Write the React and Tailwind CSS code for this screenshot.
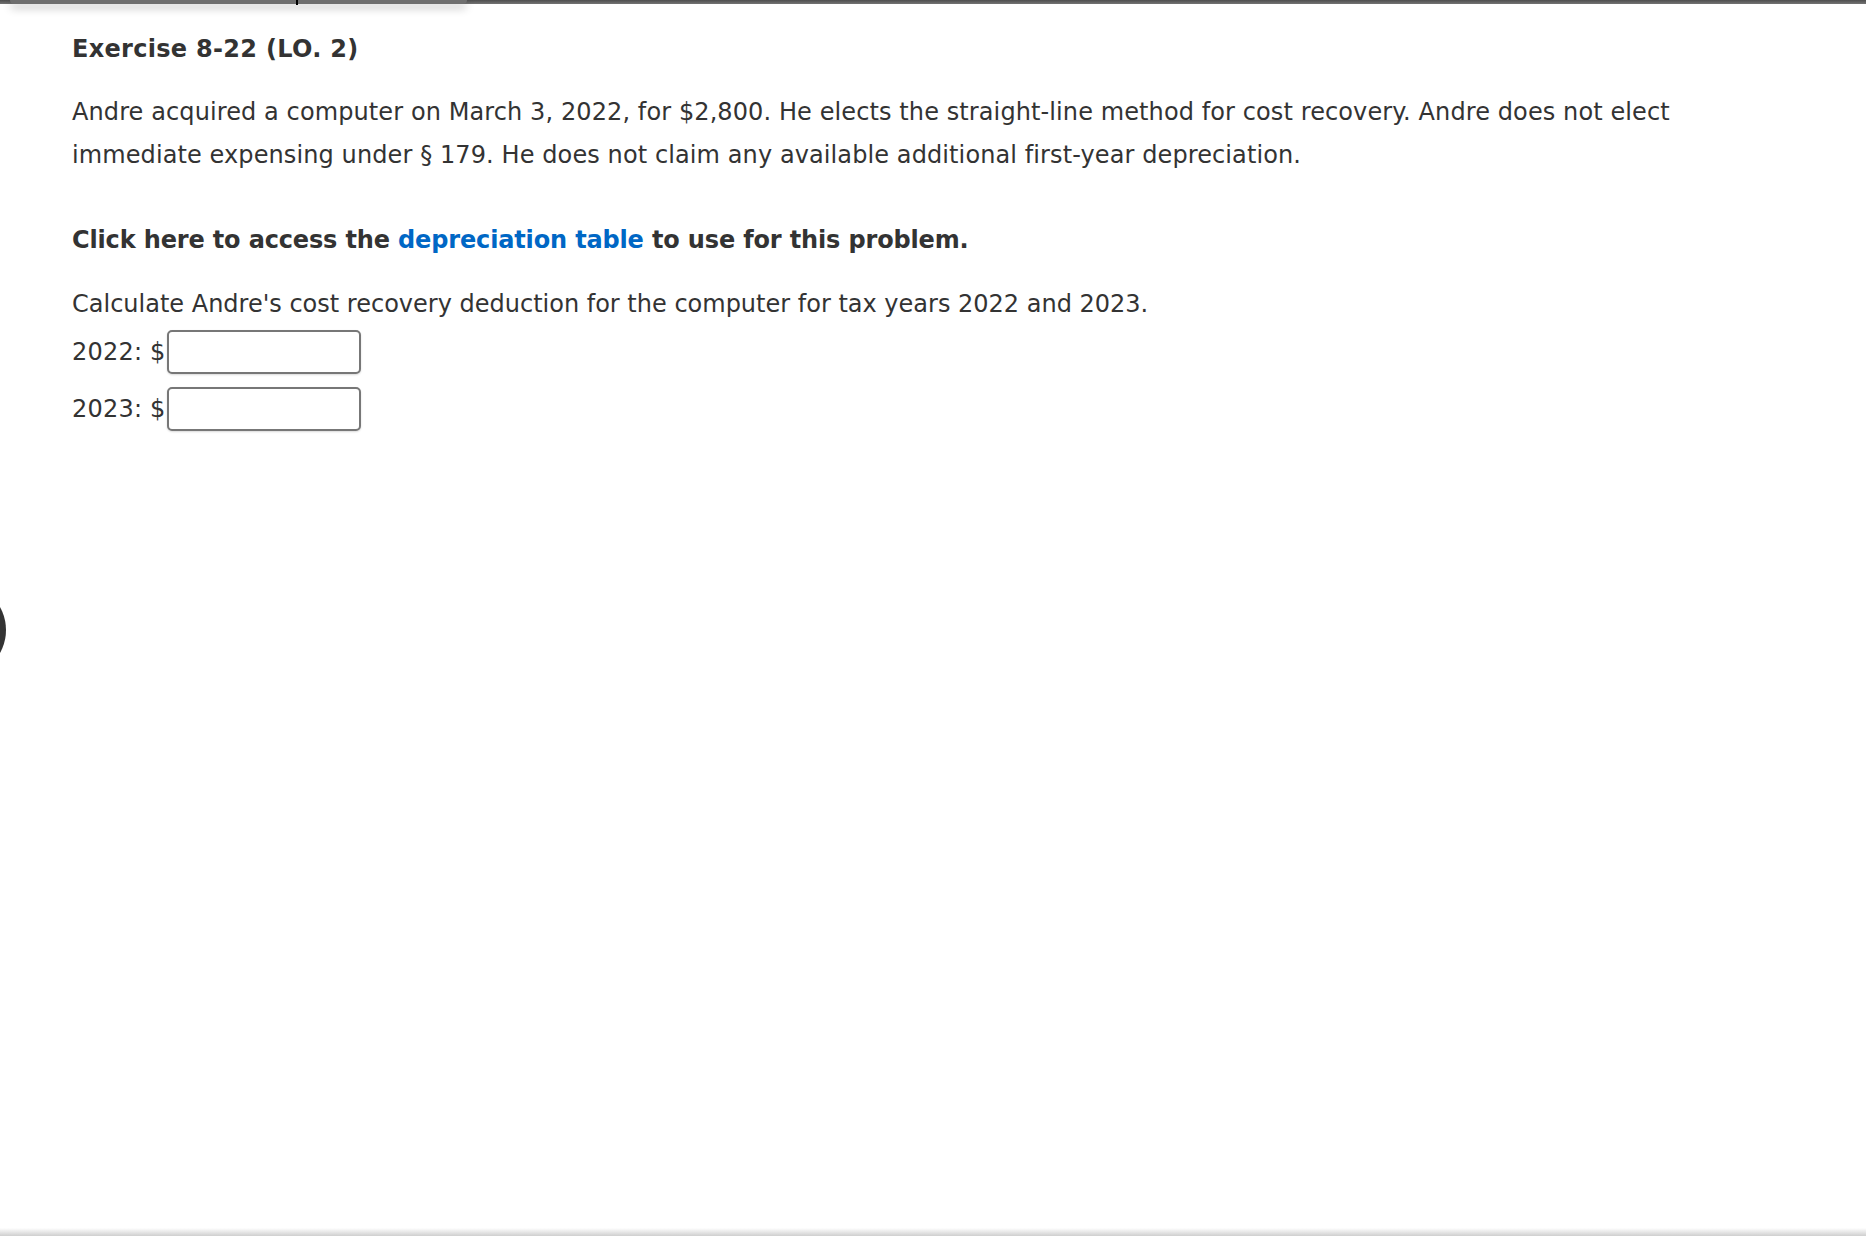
import { useState } from 'react';

const YearInput = ({ year, value, onChange }) => (
  <div className="flex items-center h-[44px]">
    <span className="leading-[44px] tracking-[0.2px]">{year}: $</span>
    <input
      type="text"
      value={value}
      onChange={(e) => onChange(e.target.value)}
      className="ml-[2px] w-[194px] h-[44px] border-2 border-[#777777] rounded-[5px] bg-white px-2 outline-none shadow-[0_1px_2px_rgba(0,0,0,0.15)]"
    />
  </div>
);

const App = () => {
  const [values, setValues] = useState({ 2022: '', 2023: '' });

  return (
    <div className="relative h-[1236px] flex flex-col bg-white overflow-hidden text-[#333333] text-[24px] font-['DejaVu_Sans',Verdana,sans-serif]">
      {/* top strip */}
      <div className="relative h-[4px] shrink-0 bg-gradient-to-b from-[#4e4e4e] to-[#747474]">
        <div className="absolute left-[10px] top-0 w-[457px] h-[4px] bg-[#6f6f6f] rounded-b-[6px] shadow-[0_4px_9px_rgba(0,0,0,0.28)]" />
        <div className="absolute left-[296px] top-0 w-[2px] h-[5px] bg-black" />
      </div>

      <div className="flex-1 pl-[72px] pt-[24px]">
        <h1 className="font-bold leading-[43px] tracking-[0.3px]">Exercise 8-22 (LO. 2)</h1>

        <p className="mt-[20px] leading-[43px] tracking-[0.1px] max-w-[1640px]">
          Andre acquired a computer on March 3, 2022, for $2,800. He elects the straight-line method for cost recovery. Andre does not elect immediate expensing under § 179. He does not claim any available additional first-year depreciation.
        </p>

        <p className="mt-[42px] font-bold leading-[43px] tracking-[-0.15px]">
          Click here to access the <a href="#" className="text-[#0067c5]">depreciation table</a> to use for this problem.
        </p>

        <p className="mt-[21px] leading-[43px]">
          Calculate Andre's cost recovery deduction for the computer for tax years 2022 and 2023.
        </p>

        <div className="mt-[4px] flex flex-col gap-[13px]">
          {[2022, 2023].map((y) => (
            <YearInput
              key={y}
              year={y}
              value={values[y]}
              onChange={(v) => setValues({ ...values, [y]: v })}
            />
          ))}
        </div>
      </div>

      {/* floating round button peeking at the left edge */}
      <div className="absolute left-[-88px] top-[583px] w-[94px] h-[94px] rounded-full bg-[#333333]" />

      {/* bottom shadow */}
      <div className="h-[8px] shrink-0 bg-gradient-to-b from-white to-[#cfcfcf]" />
    </div>
  );
};

export default App;
